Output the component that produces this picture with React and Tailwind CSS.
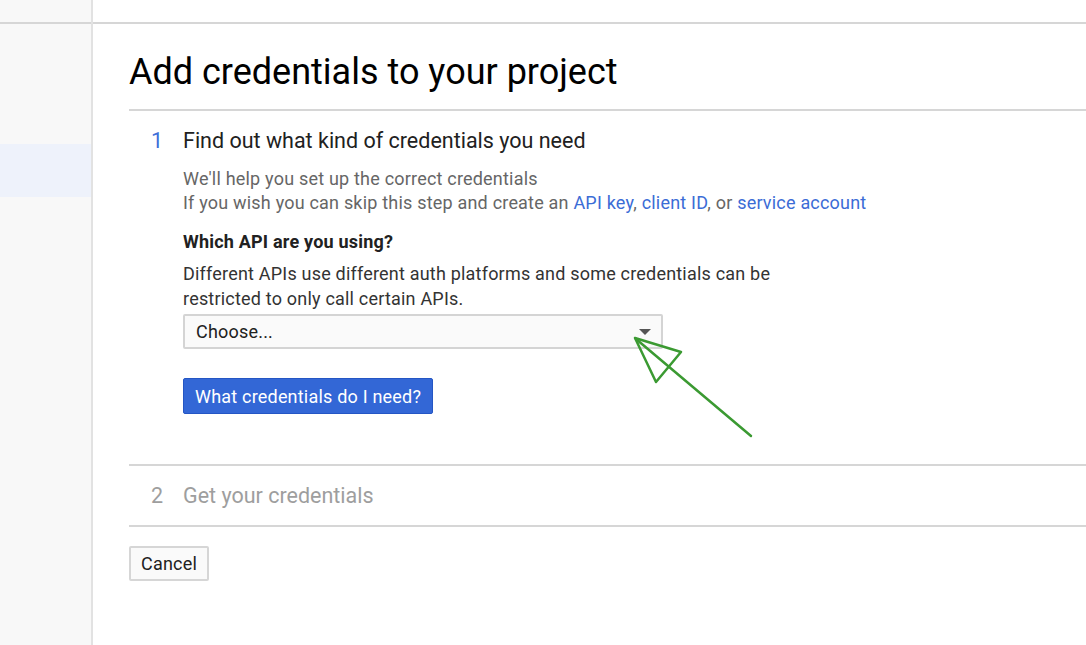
import React from "react";

function Arrow() {
  return (
    <svg
      className="pointer-events-none absolute left-0 top-0"
      width="1086"
      height="645"
      viewBox="0 0 1086 645"
    >
      <g fill="none" stroke="#3b9a32" strokeWidth="2.5" strokeLinejoin="round" strokeLinecap="round">
        <path d="M635 338 L681 352 L656 382 Z" />
        <path d="M636 339 L751 436" />
      </g>
    </svg>
  );
}

export default function App() {
  return (
    <div
      className="relative flex h-[645px] w-[1086px] overflow-hidden bg-white text-[#212121]"
      style={{ fontFamily: "Roboto, 'Liberation Sans', sans-serif" }}
    >
      <aside className="flex w-[93px] shrink-0 flex-col border-r-2 border-[#e2e2e2] bg-[#f8f8f8]">
        <div className="h-[24px] shrink-0 border-b-2 border-[#d6d6d6]" />
        <div className="h-[120px] shrink-0" />
        <div className="h-[53px] shrink-0 bg-[#eef2fb]" />
      </aside>

      <main className="flex flex-1 flex-col">
        <div className="h-[24px] shrink-0 border-b-2 border-[#d6d6d6]" />
        <div className="pl-[36px]">
          <h1 className="pt-[26px] pb-[15px] text-[36px] leading-[44px] text-black">
            Add credentials to your project
          </h1>
          <div className="border-t-2 border-[#d6d6d6]">
            <div className="flex pt-[17px] pb-[50px] tracking-[0.2px]">
              <div className="w-[54px] pl-[22px] text-[21.5px] leading-[26px] tracking-normal text-[#3f6fd8]">1</div>
              <div>
                <h2 className="text-[21.5px] leading-[26px] tracking-normal">Find out what kind of credentials you need</h2>
                <p className="mt-[13px] text-[18px] leading-[24px] text-[#666]">
                  We'll help you set up the correct credentials
                  <br />
                  If you wish you can skip this step and create an{" "}
                  <a className="text-[#3b6cd6]">API key</a>,{" "}
                  <a className="text-[#3b6cd6]">client ID</a>, or{" "}
                  <a className="text-[#3b6cd6]">service account</a>
                </p>
                <h3 className="mt-[15px] text-[18px] font-bold leading-[24px]">Which API are you using?</h3>
                <p className="mt-[7px] text-[18px] leading-[25px] text-[#333]">
                  Different APIs use different auth platforms and some credentials can be
                  <br />
                  restricted to only call certain APIs.
                </p>
                <div className="mt-[3px] flex h-[35px] w-[480px] items-center justify-between rounded-[2px] border-2 border-[#d4d4d4] bg-[#fafafa] pl-[11px] pr-[10px] text-[18px]">
                  <span>Choose...</span>
                  <span className="h-0 w-0 border-x-[6px] border-t-[6px] border-x-transparent border-t-[#555]" />
                </div>
                <button className="mt-[29px] h-[36px] rounded-[2px] border border-[#2456c4] bg-[#3367d6] px-[11px] text-[18px] text-white">
                  What credentials do I need?
                </button>
              </div>
            </div>
          </div>
          <div className="flex h-[63px] items-center border-y-2 border-[#d6d6d6] pt-[2px]">
            <div className="w-[54px] pl-[22px] text-[21.5px] text-[#9e9e9e]">2</div>
            <div className="text-[21.5px] text-[#9e9e9e]">Get your credentials</div>
          </div>
          <button className="mt-[19px] h-[35px] rounded-[2px] border-2 border-[#d6d6d6] bg-[#fafafa] px-[10px] text-[18px] tracking-[0.2px]">
            Cancel
          </button>
        </div>
      </main>
      <Arrow />
    </div>
  );
}
